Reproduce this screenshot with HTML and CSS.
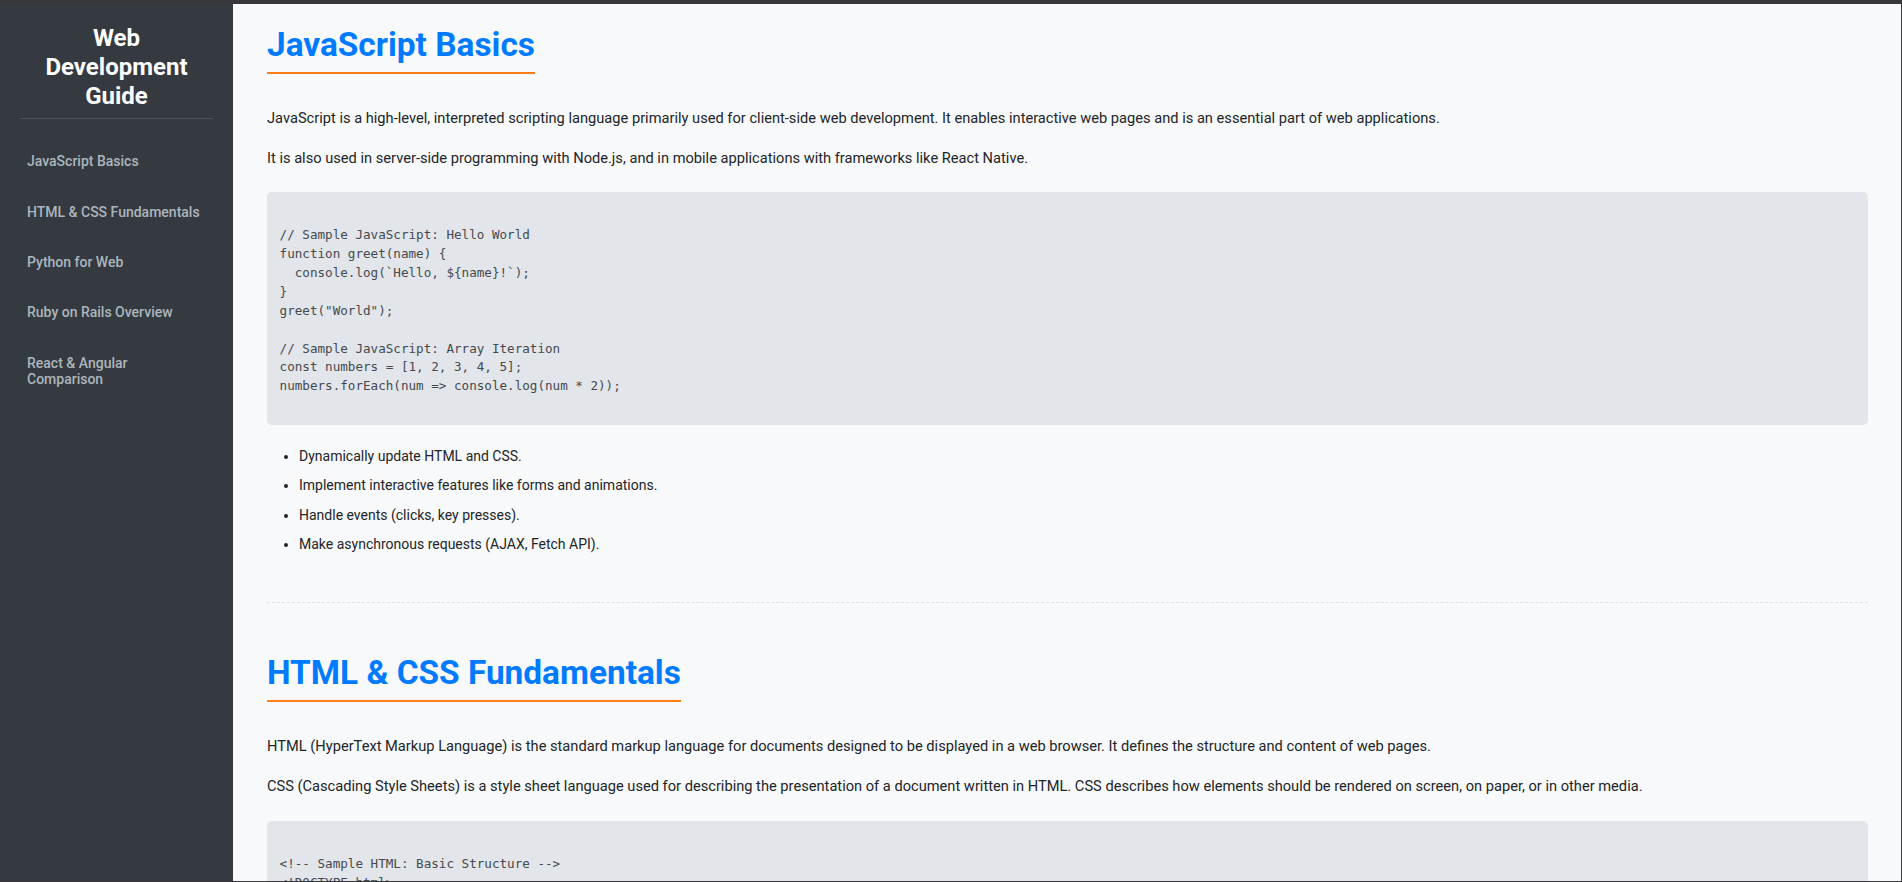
FILE: index.html
```html
<!DOCTYPE html>
<html lang="en">
<head>
<meta charset="utf-8">
<title>Web Development Guide</title>
<link rel="stylesheet" href="styles.css">
</head>
<body>
<div class="app">
  <aside class="sidebar">
    <h1 class="brand">Web Development Guide</h1>
    <nav>
      <ul class="nav">
        <li><a href="#js">JavaScript Basics</a></li>
        <li><a href="#html-css">HTML &amp; CSS Fundamentals</a></li>
        <li><a href="#python">Python for Web</a></li>
        <li><a href="#ruby">Ruby on Rails Overview</a></li>
        <li><a href="#react-angular">React &amp; Angular Comparison</a></li>
      </ul>
    </nav>
  </aside>
  <main class="main">
    <section class="section" id="js">
      <h2 class="title">JavaScript Basics</h2>
      <p>JavaScript is a high-level, interpreted scripting language primarily used for client-side web development. It enables interactive web pages and is an essential part of web applications.</p>
      <p>It is also used in server-side programming with Node.js, and in mobile applications with frameworks like React Native.</p>
<pre class="code"><code>
// Sample JavaScript: Hello World
function greet(name) {
  console.log(`Hello, ${name}!`);
}
greet("World");

// Sample JavaScript: Array Iteration
const numbers = [1, 2, 3, 4, 5];
numbers.forEach(num =&gt; console.log(num * 2));
    </code></pre>
      <ul class="list">
        <li>Dynamically update HTML and CSS.</li>
        <li>Implement interactive features like forms and animations.</li>
        <li>Handle events (clicks, key presses).</li>
        <li>Make asynchronous requests (AJAX, Fetch API).</li>
      </ul>
    </section>
    <section class="section" id="html-css">
      <h2 class="title">HTML &amp; CSS Fundamentals</h2>
      <p>HTML (HyperText Markup Language) is the standard markup language for documents designed to be displayed in a web browser. It defines the structure and content of web pages.</p>
      <p>CSS (Cascading Style Sheets) is a style sheet language used for describing the presentation of a document written in HTML. CSS describes how elements should be rendered on screen, on paper, or in other media.</p>
<pre class="code"><code>
&lt;!-- Sample HTML: Basic Structure --&gt;
&lt;!DOCTYPE html&gt;
&lt;html&gt;
  &lt;head&gt;
    &lt;title&gt;My Page&lt;/title&gt;
  &lt;/head&gt;
  &lt;body&gt;
    &lt;h1&gt;Hello, World!&lt;/h1&gt;
  &lt;/body&gt;
&lt;/html&gt;
    </code></pre>
      <ul class="list">
        <li>Structure content with semantic HTML elements.</li>
        <li>Style layouts with Flexbox and Grid.</li>
        <li>Build responsive designs with media queries.</li>
      </ul>
    </section>
  </main>
</div>
</body>
</html>
```
FILE: styles.css
```css
* { box-sizing: border-box; }

html, body {
  margin: 0;
  height: 100%;
}

body {
  background: #38373c;
  padding: 4px 1px 1px 0;
  font-family: Roboto, "Liberation Sans", Arial, sans-serif;
  font-size: 14px;
  color: #212529;
  overflow: hidden;
}

.app {
  display: flex;
  height: 100%;
}

.sidebar {
  flex: 0 0 233px;
  width: 233px;
  background: #343a40;
  padding: 20px;
  color: #fff;
}

.brand {
  margin: 0;
  font-size: 24px;
  line-height: 1.2;
  font-weight: 700;
  text-align: center;
  padding-bottom: 8px;
  border-bottom: 1px solid #4b545c;
}

.nav {
  list-style: none;
  margin: 24px 0 0;
  padding: 0;
}

.nav li {
  margin-bottom: 13.5px;
}

.nav a {
  display: block;
  padding: 10px 7px;
  color: #adb5bd;
  text-decoration: none;
  font-size: 14px;
  line-height: 1.2;
  font-weight: 500;
}

.main {
  flex: 1;
  background: #f8f9fa;
  padding: 20.5px 33px 0 34px;
  overflow-y: auto;
  scrollbar-width: none;
}

.main::-webkit-scrollbar { display: none; }

.section {
  padding-bottom: 39.3px;
  border-bottom: 1px dashed #dee2e6;
  margin-bottom: 50.5px;
}

.title {
  width: fit-content;
  margin: 0 0 33px;
  font-size: 33.4px;
  line-height: 1.2;
  font-weight: 700;
  color: #007bff;
  padding-bottom: 7px;
  border-bottom: 2px solid #fd7e14;
}

.section p {
  margin: 0 0 16.56px;
  font-size: 14.65px;
  line-height: 1.6;
}

.code {
  margin: 22.3px 0 0;
  background: #e2e5e9;
  border-radius: 5px;
  padding: 15px 12.6px 10.2px;
  font-family: "DejaVu Sans Mono", "Liberation Mono", monospace;
  font-size: 12.6px;
  line-height: 1.5;
  color: #454a50;
  overflow-x: auto;
}

.code code {
  font-family: inherit;
}

.list {
  margin: 19.7px 0 0;
  padding-left: 32px;
}

.list li {
  line-height: 1.6;
  margin-bottom: 7px;
}
```
